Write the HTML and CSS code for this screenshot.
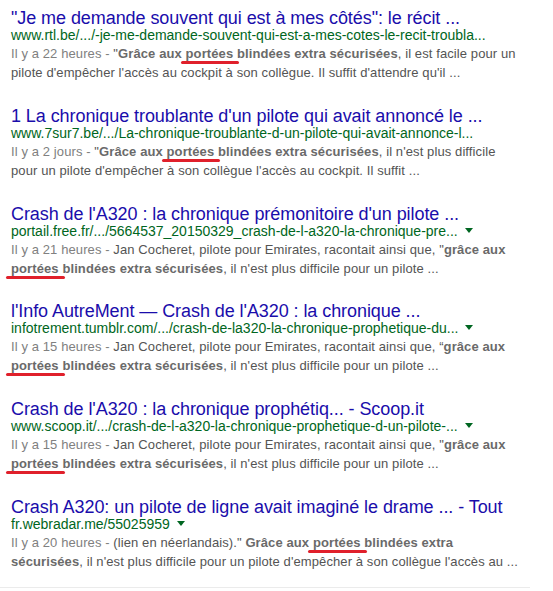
FILE: index.html
```html
<!DOCTYPE html>
<html lang="fr">
<head>
<meta charset="utf-8">
<link rel="stylesheet" href="styles.css">
</head>
<body>
<div class="results">
  <div class="g">
    <h3 class="r">"Je me demande souvent qui est à mes côtés": le récit ...</h3>
    <div class="url">www.rtl.be/.../-je-me-demande-souvent-qui-est-a-mes-cotes-le-recit-troubla...</div>
    <div class="st"><span class="f">Il y a 22 heures - </span>"<b>Grâce aux <span class="mark">portées</span> blindées extra sécurisées</b>, il est facile pour un pilote d'empêcher l'accès au cockpit à son collègue. Il suffit d'attendre qu'il ...</div>
  </div>
  <div class="g">
    <h3 class="r">1 La chronique troublante d'un pilote qui avait annoncé le ...</h3>
    <div class="url">www.7sur7.be/.../La-chronique-troublante-d-un-pilote-qui-avait-annonce-l...</div>
    <div class="st"><span class="f">Il y a 2 jours - </span>"<b>Grâce aux <span class="mark">portées</span> blindées extra sécurisées</b>, il n'est plus difficile pour un pilote d'empêcher à son collègue l'accès au cockpit. Il suffit ...</div>
  </div>
  <div class="g">
    <h3 class="r">Crash de l'A320 : la chronique prémonitoire d'un pilote ...</h3>
    <div class="url">portail.free.fr/.../5664537_20150329_crash-de-l-a320-la-chronique-pre...<span class="arrow"></span></div>
    <div class="st"><span class="f">Il y a 21 heures - </span>Jan Cocheret, pilote pour Emirates, racontait ainsi que, "<b>grâce aux <span class="mark">portées</span> blindées extra sécurisées</b>, il n'est plus difficile pour un pilote ...</div>
  </div>
  <div class="g">
    <h3 class="r">l'Info AutreMent — Crash de l'A320 : la chronique ...</h3>
    <div class="url">infotrement.tumblr.com/.../crash-de-la320-la-chronique-prophetique-du...<span class="arrow"></span></div>
    <div class="st"><span class="f">Il y a 15 heures - </span>Jan Cocheret, pilote pour Emirates, racontait ainsi que, “<b>grâce aux <span class="mark">portées</span> blindées extra sécurisées</b>, il n'est plus difficile pour un pilote ...</div>
  </div>
  <div class="g">
    <h3 class="r">Crash de l'A320 : la chronique prophétiq... - Scoop.it</h3>
    <div class="url">www.scoop.it/.../crash-de-l-a320-la-chronique-prophetique-d-un-pilote-...<span class="arrow"></span></div>
    <div class="st"><span class="f">Il y a 15 heures - </span>Jan Cocheret, pilote pour Emirates, racontait ainsi que, "<b>grâce aux <span class="mark">portées</span> blindées extra sécurisées</b>, il n'est plus difficile pour un pilote ...</div>
  </div>
  <div class="g last">
    <h3 class="r">Crash A320: un pilote de ligne avait imaginé le drame ... - Tout</h3>
    <div class="url">fr.webradar.me/55025959<span class="arrow"></span></div>
    <div class="st"><span class="f">Il y a 20 heures - </span>(lien en néerlandais)." <b>Grâce aux <span class="mark">portées</span> blindées extra sécurisées</b>, il n'est plus difficile pour un pilote d'empêcher à son collègue l'accès au ...</div>
  </div>
</div>
</body>
</html>
```

FILE: styles.css
```css
html, body {
  margin: 0;
  padding: 0;
  background: #ffffff;
}

body {
  font-family: "Liberation Sans", Arial, sans-serif;
}

.results {
  width: 530px;
  padding-top: 8px;
  border-bottom: 1px solid #ebebeb;
  padding-bottom: 16px;
}

.g {
  padding-left: 11px;
  margin-bottom: 23.8px;
  max-width: 512px;
}

.g.last {
  margin-bottom: 0;
}

.r {
  margin: 0;
  font-size: 18px;
  font-weight: normal;
  line-height: 20px;
  letter-spacing: -0.07px;
  color: #1a0dab;
  white-space: nowrap;
}

.url {
  font-size: 14px;
  line-height: 14px;
  color: #006621;
  white-space: nowrap;
}

.arrow {
  display: inline-block;
  width: 0;
  height: 0;
  margin-left: 7px;
  vertical-align: 3px;
  border-top: 5px solid #006621;
  border-left: 4px solid transparent;
  border-right: 4px solid transparent;
}

.st {
  margin-top: 2px;
  font-size: 13px;
  line-height: 19px;
  letter-spacing: 0.1px;
  color: #545454;
}

.st b {
  color: #6a6a6a;
  font-weight: bold;
}

.f {
  color: #808080;
}

.mark {
  position: relative;
}

.mark::after {
  content: "";
  position: absolute;
  left: -5px;
  right: -6px;
  bottom: -3px;
  height: 3px;
  background: #e0202b;
  border-radius: 2px;
}
```
